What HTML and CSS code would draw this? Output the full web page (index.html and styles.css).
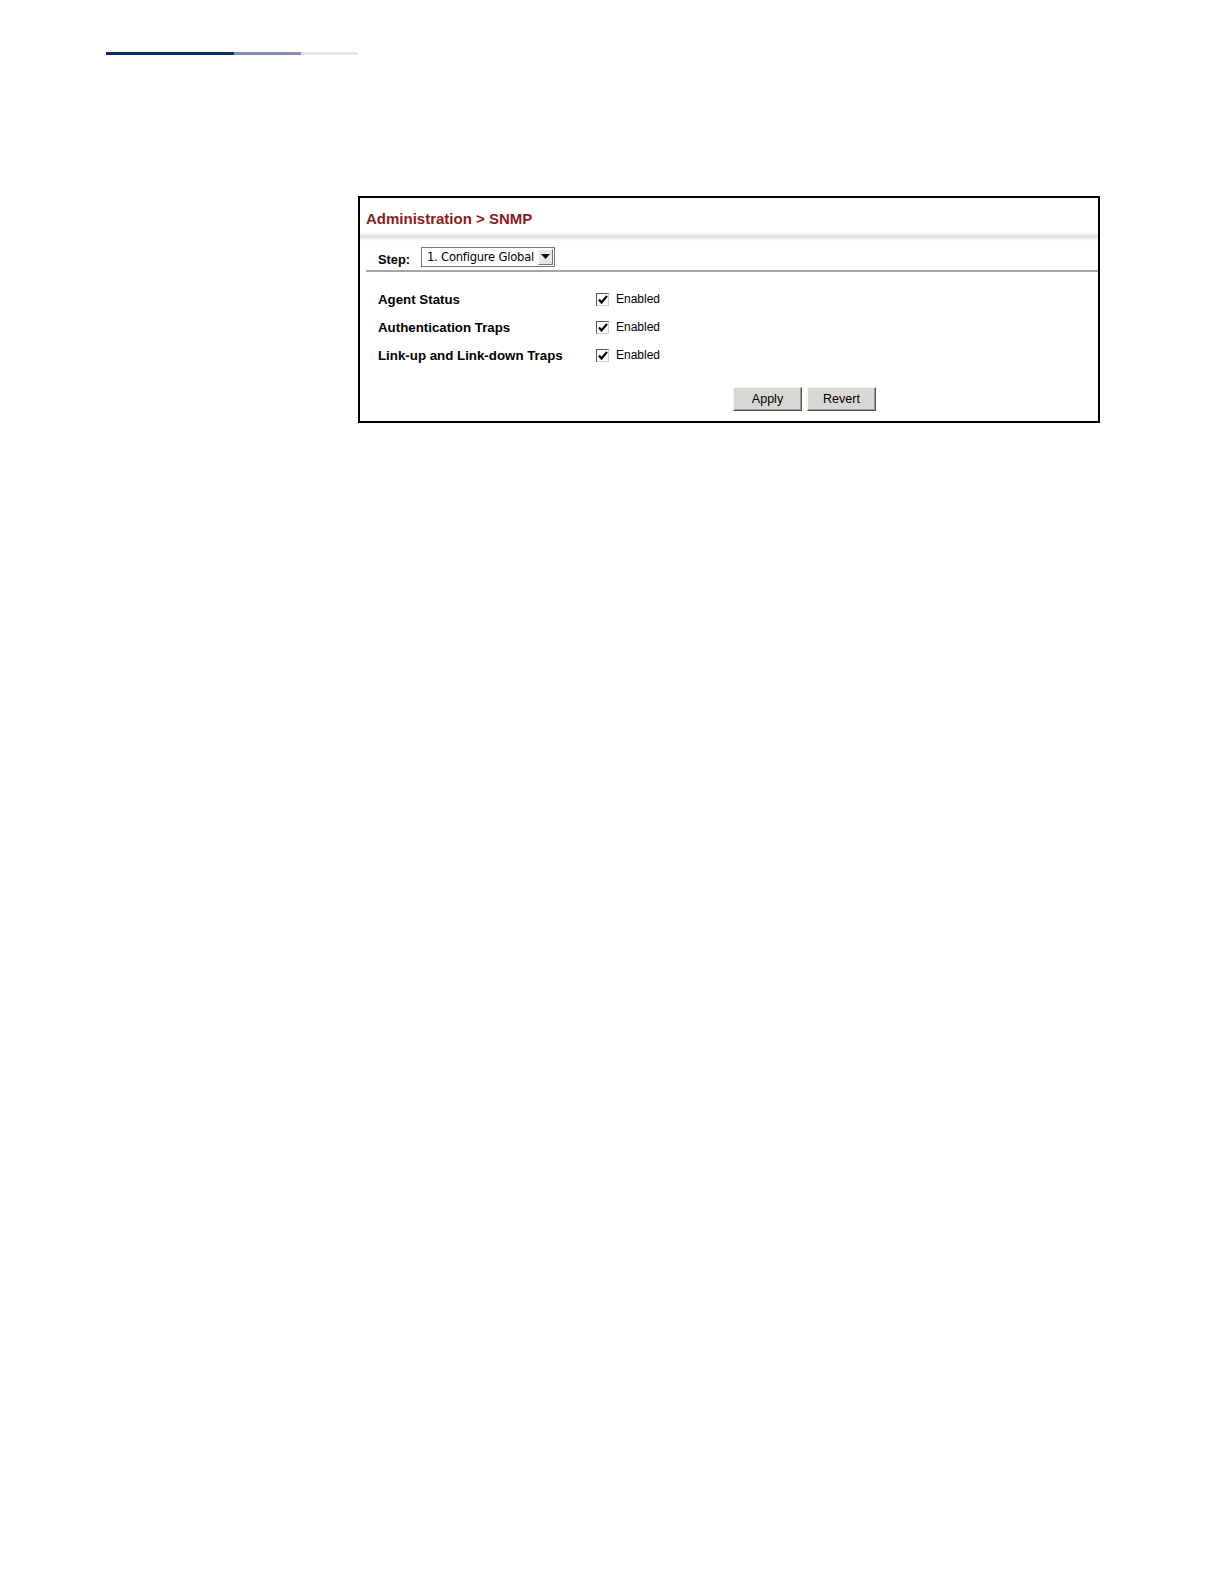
FILE: index.html
```html
<!DOCTYPE html>
<html>
<head>
<meta charset="utf-8">
<link rel="stylesheet" href="styles.css">
</head>
<body>
<div class="topbar"><span class="seg seg1"></span><span class="seg seg2"></span><span class="seg seg3"></span></div>
<div class="panel">
  <div class="title">Administration &gt; SNMP</div>
  <div class="shade"></div>
  <div class="step">
    <span class="step-label">Step:</span>
    <span class="select"><span class="select-text">1. Configure Global</span><span class="select-btn"><svg width="9" height="5" viewBox="0 0 9 5"><path d="M0 0H9L4.5 5Z" fill="#000"/></svg></span></span>
  </div>
  <div class="rows">
    <div class="row"><span class="label">Agent Status</span><span class="cb"><svg width="10" height="9" viewBox="0 0 10 9"><path d="M1 4.5L3.5 7.5L9 1" fill="none" stroke="#000" stroke-width="2.2"/></svg></span><span class="en">Enabled</span></div>
    <div class="row"><span class="label">Authentication Traps</span><span class="cb"><svg width="10" height="9" viewBox="0 0 10 9"><path d="M1 4.5L3.5 7.5L9 1" fill="none" stroke="#000" stroke-width="2.2"/></svg></span><span class="en">Enabled</span></div>
    <div class="row"><span class="label">Link-up and Link-down Traps</span><span class="cb"><svg width="10" height="9" viewBox="0 0 10 9"><path d="M1 4.5L3.5 7.5L9 1" fill="none" stroke="#000" stroke-width="2.2"/></svg></span><span class="en">Enabled</span></div>
  </div>
  <div class="buttons">
    <span class="btn">Apply</span>
    <span class="btn">Revert</span>
  </div>
</div>
</body>
</html>
```
FILE: styles.css
```css
html, body { margin: 0; padding: 0; background: #fff; }
body { font-family: "Liberation Sans", Arial, sans-serif; color: #000; }
.topbar { display: flex; margin: 52px 0 0 106px; height: 3px; }
.seg { display: block; height: 3px; }
.seg1 { width: 128px; background: #0d2a66; }
.seg2 { width: 67px; background: #8392b0; }
.seg3 { width: 57px; background: #e6e6e8; }
.panel {
  margin: 141px 0 0 358px;
  width: 738px;
  height: 223px;
  border: 2px solid #000;
  box-sizing: content-box;
}
.title {
  margin: 12px 0 0 6px;
  font-size: 15px;
  font-weight: bold;
  color: #8b1c1c;
  height: 18px;
  line-height: 18px;
}
.shade {
  margin-top: 4px;
  height: 9px;
  background: linear-gradient(#fff, #e0e0e0 50%, #fff);
}
.step {
  display: flex;
  align-items: center;
  margin: 5px 0 0 6px;
  padding: 0 0 2px 12px;
  height: 22px;
  border-bottom: 2px solid #a6a6a6;
}
.step-label { font-size: 12.8px; font-weight: bold; margin-top: 5px; width: 43px; }
.select {
  display: flex;
  align-items: center;
  height: 18px;
  width: 132px;
  border: 1px solid #7a7a7a;
  box-sizing: content-box;
  margin-top: -1px;
}
.select-text { flex: 1; font-size: 12.8px; padding-left: 5px; font-family: "DejaVu Sans Condensed", "Liberation Sans Narrow", sans-serif; letter-spacing: -0.2px; }
.select-btn {
  width: 15px; height: 16px; margin-right: 1px;
  background: #e6e6e6;
  border: 1px solid; border-color: #fff #777 #777 #fff;
  box-sizing: border-box;
  display: flex; align-items: center; justify-content: center;
}
.rows { margin-top: 13px; padding-left: 18px; }
.row { display: flex; align-items: center; height: 28px; }
.label { width: 218px; font-size: 13.3px; font-weight: bold; }
.cb {
  width: 13px; height: 13px; box-sizing: border-box;
  border: 1px solid #555; border-right-color: #ccc; border-bottom-color: #ccc;
  background: #fff;
  display: flex; align-items: center; justify-content: center;
  margin-right: 7px;
}
.en { font-size: 12px; }
.buttons { display: flex; gap: 5px; margin: 18px 0 0 373px; }
.btn {
  width: 69px; height: 24px; box-sizing: border-box;
  background: #d8d7d2;
  border: 1px solid; border-color: #f4f4f4 #555 #555 #f4f4f4;
  box-shadow: inset -1px -1px 0 #999;
  font-size: 12.5px;
  display: flex; align-items: center; justify-content: center;
}
```
